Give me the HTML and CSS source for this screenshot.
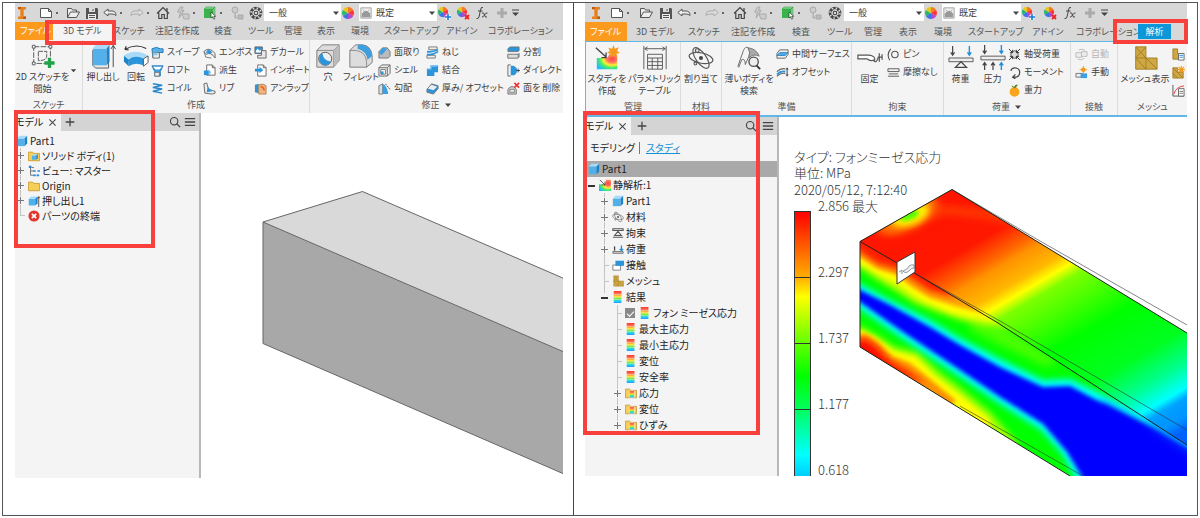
FILE: index.html
```html
<!DOCTYPE html>
<html lang="ja">
<head>
<meta charset="utf-8">
<meta name="viewport" content="width=device-width, initial-scale=1">
<title>3D モデルと解析</title>
<link rel="stylesheet" href="styles.css">
</head>
<body>
<svg class="defs" aria-hidden="true">
  <defs>
    <linearGradient id="rainbow" x1="0" y1="0" x2="0" y2="1"><stop offset="0" stop-color="#f33"/><stop offset=".25" stop-color="#f75"/><stop offset=".45" stop-color="#fd2"/><stop offset=".65" stop-color="#6e5"/><stop offset=".85" stop-color="#2cf"/><stop offset="1" stop-color="#29f"/></linearGradient>
    <radialGradient id="heat" cx=".75" cy=".3" r=".85"><stop offset="0" stop-color="#f44"/><stop offset=".3" stop-color="#f76"/><stop offset=".5" stop-color="#fe3"/><stop offset=".72" stop-color="#4e6"/><stop offset="1" stop-color="#2bf"/></radialGradient>
  </defs>
  <symbol id="logo" viewBox="0 0 14 14"><path d="M3 1h8v2.400H8.700v7.200H11V13H3v-2.400h2.300V3.400H3z" fill="#e8801c"/><path d="M3 1h3v2H3zM8.700 10.600H11V13H8z" fill="#b65b10"/></symbol>
  <symbol id="new" viewBox="0 0 14 14"><path d="M1.500 2.500h8l3 3v6h-11zM9.500 2.500v3h3" fill="#fff" stroke="#555"/></symbol>
  <symbol id="open" viewBox="0 0 14 14"><path d="M1.500 11.500v-9h4l1 1.500h4v2M1.500 11.500l3-5.500h9l-3 5.500z" fill="#eee" stroke="#555"/></symbol>
  <symbol id="save" viewBox="0 0 14 14"><path d="M1 2h11l1 1v10H1z" fill="#555"/><path d="M4 2h6v4H4z" fill="#ddd"/><path d="M3 8h8v5H3z" fill="#eee"/><path d="M4 9.500h6M4 11.500h6M8 3v2" stroke="#555"/></symbol>
  <symbol id="undo" viewBox="0 0 14 14"><path d="M.8 6.500L5 3v2h4q4 0 4 4.500Q11.500 8 9 8H5v2z" fill="#eee" stroke="#555"/></symbol>
  <symbol id="redo" viewBox="0 0 14 14"><path d="M13.200 6.500L9 3v2H5Q1 5 1 9.500 2.500 8 5 8h4v2z" fill="#ddd" stroke="#aaa"/></symbol>
  <symbol id="home" viewBox="0 0 14 14"><path d="M1 7.500L7 1.500l6 6M2.800 6.500v6h3v-4h2.500v4h3v-6M11 2v3" fill="none" stroke="#444" stroke-width="1.200"/></symbol>
  <symbol id="update" viewBox="0 0 14 14"><path d="M4.500 1L1.500 6h3L3 12M4.500 1H7L5.500 4.500H8L3 12M6 8h7v5H8z" fill="#ccc" stroke="#aaa"/></symbol>
  <symbol id="pick" viewBox="0 0 14 14"><path d="M1 3h9v9H1z" fill="#3bb24b"/><path d="M1 3l2-2h9l-2 2zM10 3l2-2v9l-2 2z" fill="#8bd496" stroke="#2a9b3c" stroke-width=".5"/><path d="M8 6v6l1.500-1.300 1.200 2.500 1.200-.7-1.200-2.200h2z" fill="#fff" stroke="#333" stroke-width=".7"/></symbol>
  <symbol id="share" viewBox="0 0 14 14"><circle cx="5" cy="4" r="3" fill="#ccc" stroke="#aaa"/><path d="M5 7v5h2M8 9h5v4H8z" fill="#bbb" stroke="#aaa"/></symbol>
  <symbol id="ring" viewBox="0 0 14 14"><circle cx="7" cy="7" r="5" fill="none" stroke="#444" stroke-width="2.600"/><circle cx="7" cy="7" r="5" fill="none" stroke="#ddd" stroke-width="1.600" stroke-dasharray="1.500 2.430"/><circle cx="7" cy="7" r="1.800" fill="none" stroke="#444"/><path d="M3.500 3.500l2.300 2.300m2.400 2.400l2.300 2.300m0-7L8.200 5.800M5.800 8.200l-2.300 2.300" stroke="#555"/></symbol>
  <symbol id="wheel" viewBox="0 0 14 14"><path d="M7 7V1a6 6 0 0 1 5.200 3z" fill="#f77a20"/><path d="M7 7l5.200-3a6 6 0 0 1 0 6z" fill="#f33"/><path d="M7 7l5.200 3A6 6 0 0 1 7 13z" fill="#b04ad0"/><path d="M7 7v6a6 6 0 0 1-5.200-3z" fill="#3a74e8"/><path d="M7 7l-5.200 3a6 6 0 0 1 0-6z" fill="#28b86a"/><path d="M7 7L1.800 4A6 6 0 0 1 7 1z" fill="#e6c71c"/></symbol>
  <symbol id="wheelplus" viewBox="0 0 14 14"><use href="#wheel" width="12" height="12"/><path d="M11 8v6M8 11h6" stroke="#fff" stroke-width="3"/><path d="M11 8v6M8 11h6" stroke="#1678d2" stroke-width="1.600"/></symbol>
  <symbol id="wheelx" viewBox="0 0 14 14"><use href="#wheel" width="12" height="12"/><path d="M9 9l4 4m0-4l-4 4" stroke="#e22" stroke-width="1.800"/></symbol>
  <symbol id="swatch" viewBox="0 0 14 14"><path d="M1 1h12v12H1z" fill="#eee" stroke="#999"/><path d="M2 12V8q5-7 10 0v4z" fill="#999"/><path d="M3 3l2 2m6-2L9 5" stroke="#aaa"/></symbol>
  <symbol id="fx" viewBox="0 0 14 14"><path d="M8 1.500Q6 .5 5.500 4L4 11q-.5 2-2.500 1.500M3 5h4.500M7 7q2-1 2.500 2t2.500 2M12.500 7Q11 6.500 9.500 9T7 11" fill="none" stroke="#444"/></symbol>
  <symbol id="cross" viewBox="0 0 14 14"><path d="M5.500 2h3v3.500H12v3H8.500V12h-3V8.500H2v-3h3.500z" fill="#aaa"/></symbol>
  <symbol id="more" viewBox="0 0 14 14"><path d="M3 4h7" stroke="#444"/><path d="M3 6.500h7L6.500 10z" fill="#444"/></symbol>
  <symbol id="down" viewBox="0 0 8 8"><path d="M1 2.500h6L4 6z" fill="#444"/></symbol>

  <symbol id="sketch" viewBox="0 0 28 28"><path d="M4 4h18v18H4z" fill="none" stroke="#555" stroke-dasharray="6 1.500"/><path d="M2.500 2.500h3v3h-3zM20.500 2.500h3v3h-3zM2.500 20.500h3v3h-3z" fill="#fff" stroke="#555"/><path d="M9 9h9v5q0 5-9 5z" fill="none" stroke="#555" stroke-dasharray="5 1"/><path d="M21 16v11M15.500 21.500h11" stroke="#1fa347" stroke-width="3.600"/></symbol>
  <symbol id="extrude" viewBox="0 0 28 28"><path d="M3 8v16l3 3h14V10L6 8z" fill="#e8e8e8" stroke="#555"/><path d="M3 6h15v18H3z" fill="#53b0ea"/><path d="M3 6l3-4h15l-3 4z" fill="#a9daf8"/><path d="M18 6l3-4v18l-3 4z" fill="#1e83c8"/><path d="M25 26V3m-2.500 3.500L25 2.500l2.500 4" fill="none" stroke="#444"/></symbol>
  <symbol id="revolve" viewBox="0 0 28 28"><path d="M2 7q12-7 23-1M2 7l1.500-3.500M2 7l4 .5" fill="none" stroke="#333" stroke-width="1.300"/><path d="M1 14q12-8 26 0l-4 7q-8-5-17 0z" fill="#53b0ea"/><path d="M1 14q12-9 26 0l-5 3q-9-5-16 1z" fill="#a9daf8"/><path d="M6 18q7-6 16-1v7q-9-4-16 1z" fill="#2b94da"/><path d="M1 14l5 4v7l-5-5z" fill="#1e83c8"/><path d="M27 14v7l-5 4v-8z" fill="#fff" stroke="#555"/></symbol>
  <symbol id="hole" viewBox="0 0 28 28"><path d="M2 8l6-6h18v17l-6 7H2z" fill="#ddd" stroke="#777"/><path d="M2 8h18v18M20 8l6-6" fill="none" stroke="#888"/><path d="M20 8l6-6v17l-6 7z" fill="#bbb"/><circle cx="11" cy="17" r="7" fill="#eee" stroke="#555"/><path d="M8 11a7 7 0 0 0 3 13 7 7 0 0 0 6-4q-8-1-9-9z" fill="#2b94da"/></symbol>
  <symbol id="fillet" viewBox="0 0 28 28"><path d="M2 8l6-6h8q9 1 10 12v7l-6 5H2z" fill="#ddd" stroke="#777"/><path d="M2 8h6q11 1 12 12v6" fill="none" stroke="#888"/><path d="M11 2h5q9 2 10 12l-5 4Q20 9 10 6z" fill="#3e9fe0"/></symbol>
  <symbol id="study" viewBox="0 0 28 28"><path d="M3 14h9q4 0 4-4h9v16H3z" fill="url(#heat)"/><path d="M2 3l11 10m0-5v5.500H8" fill="none" stroke="#444" stroke-width="1.400"/><path d="M21 0l1.500 4 4-1.500L25 6.500l3 2-4 1 .5 4-3.500-2-3.500 2 .5-4-4-1 3-2L15.500 3l4 1z" fill="#f39a1d"/></symbol>
  <symbol id="table" viewBox="0 0 28 28"><path d="M2 1v25M26 1v25M3 4h22M6 2L3 4l3 2M22 2l3 2-3 2" fill="none" stroke="#555"/><path d="M6 10h16v16H6zM6 14h16M6 18h16M6 22h16M11 14v12M17 14v12" fill="none" stroke="#555"/></symbol>
  <symbol id="atom" viewBox="0 0 28 28"><g fill="none" stroke="#555" stroke-width="1.200"><ellipse cx="14" cy="14" rx="13" ry="5.500" transform="rotate(12 14 14)"/><ellipse cx="14" cy="14" rx="13" ry="5.500" transform="rotate(55 14 14)"/><circle cx="10" cy="6" r="2" fill="#eee"/><circle cx="8" cy="20" r="1.500" fill="#eee"/></g><circle cx="14" cy="14" r="2.200" fill="#444"/></symbol>
  <symbol id="thin" viewBox="0 0 28 28"><path d="M2 23L8 6q2-5 5-3 3 4 1 9l-4 9q0-7-4-5l-3 8z" fill="#f4f4f4" stroke="#666"/><path d="M13 3q9 1 12 9-6-3-11 2 2-6-1-11" fill="#aaa" stroke="#777"/><circle cx="19" cy="18" r="5" fill="#eee" stroke="#555" stroke-width="1.500"/><path d="M22 22l4 4" stroke="#333" stroke-width="2"/></symbol>
  <symbol id="fixed" viewBox="0 0 28 28"><path d="M1 11h12q7 1 6 5-5 2-8-1H1zM18 17q3 3 5-4h4M24 9v9M27 10v6" fill="#fff" stroke="#555" stroke-width="1.300"/></symbol>
  <symbol id="load" viewBox="0 0 28 28"><path d="M1 14h26v4H1z" fill="#eee" stroke="#555"/><path d="M14 18l6 6H8zM5 1v10M3 8l2 3 2-3" fill="none" stroke="#444" stroke-width="1.300"/><path d="M23 1v10M21 8l2 3 2-3" fill="none" stroke="#1b91e0" stroke-width="1.500"/></symbol>
  <symbol id="pressure" viewBox="0 0 28 28"><path d="M1 12h26v4H1z" fill="#eee" stroke="#555"/><path d="M5 0v9M3 6l2 3 2-3M5 27v-8M3 22l2-3 2 3M14 27v-8M12 22l2-3 2 3" fill="none" stroke="#444" stroke-width="1.300"/><path d="M23 0v9M21 6l2 3 2-3M23 27v-8M21 22l2-3 2 3" fill="none" stroke="#1b91e0" stroke-width="1.500"/></symbol>
  <symbol id="mesh" viewBox="0 0 28 28"><path d="M4 2h11v12h12v12H4z" fill="#cfa846" stroke="#a37c22"/><path d="M4 14h11v12M4 2l11 12 12 12M4 14l11 12M15 2L4 14" fill="none" stroke="#a37c22"/></symbol>

  <symbol id="sweep" viewBox="0 0 14 14"><path d="M1 3q5-3 9 0h3v4h-4l-1 5H2z" fill="#58b2ea" stroke="#2378b4"/><path d="M2 7h7v6H2z" fill="#eee" stroke="#666"/><path d="M2 7h5v3H2z" fill="#85c9f2"/></symbol>
  <symbol id="loft" viewBox="0 0 14 14"><path d="M1 2h12l-3 6v5H4V8z" fill="#3c9fe0" stroke="#2378b4"/><path d="M2 3h10L9 6H5z" fill="#fff"/><path d="M4 9h5v4H4z" fill="#eee" stroke="#777"/></symbol>
  <symbol id="coil" viewBox="0 0 14 14"><path d="M2 2l10 1.500L2 6l10 1.500L2 10l10 2" fill="none" stroke="#2789ca" stroke-width="1.600"/></symbol>
  <symbol id="emboss" viewBox="0 0 14 14"><path d="M1 6q5-6 12 2v5Q9 6 3 9z" fill="#eee" stroke="#666"/><path d="M4 5q3-2 6 2L7 9Q6 7 3 7z" fill="#2b94da"/><path d="M1 6l2 6 6 1" fill="none" stroke="#777"/></symbol>
  <symbol id="derive" viewBox="0 0 14 14"><path d="M4 1h6l3 3v8H4zM10 1v3h3" fill="#fff" stroke="#666"/><path d="M1 7h6v5H1z" fill="#2b94da"/><path d="M6 6l3 3-3 3" fill="#85c9f2"/></symbol>
  <symbol id="rib" viewBox="0 0 14 14"><path d="M1 2l3-1 2 7 7 2v2l-3 1-8-1z" fill="#eee" stroke="#666"/><path d="M5 5l5 5-6 1z" fill="#2b94da"/></symbol>
  <symbol id="decal" viewBox="0 0 14 14"><path d="M1 1h8v7H1z" fill="#2b94da" stroke="#666"/><path d="M2 5l2-2 2 2 2-1v3H2z" fill="#fff"/><path d="M8 5h5v8H4v-3h4z" fill="#e7e7e7" stroke="#666"/></symbol>
  <symbol id="import" viewBox="0 0 14 14"><path d="M4 1h6l3 3v9H4zM10 1v3h3" fill="#fff" stroke="#666"/><path d="M1 5h5V3l4 3.500L6 10V8H1z" fill="#2b94da"/></symbol>
  <symbol id="unwrap" viewBox="0 0 14 14"><path d="M1 3l4-1v10l-4-1z" fill="#2b94da"/><path d="M5 3q5-2 8 1v9H5z" fill="#f4b184" stroke="#a85"/><path d="M7 5q3 0 4 4" fill="none" stroke="#e26b2c" stroke-width="2"/></symbol>
  <symbol id="chamfer" viewBox="0 0 14 14"><path d="M1 6l4-4h5l3 4v5l-2 2H1z" fill="#bbb" stroke="#777"/><path d="M1 7l4-5 5 1-6 7z" fill="#3c9fe0"/></symbol>
  <symbol id="shell" viewBox="0 0 14 14"><path d="M1 4l3-3h9v9l-3 3H1zM1 4h9v9M10 4l3-3" fill="#eee" stroke="#666"/><path d="M3 6h5v5H3z" fill="#fff" stroke="#777"/><path d="M3 8h3v3H3z" fill="#2b94da"/></symbol>
  <symbol id="draft" viewBox="0 0 14 14"><path d="M1 4l4-2v11H1z" fill="#ddd" stroke="#777"/><path d="M5 2q5 2 6 11H5z" fill="#3c9fe0"/><path d="M8 2l5 6" stroke="#444" stroke-dasharray="2 1"/></symbol>
  <symbol id="thread" viewBox="0 0 14 14"><path d="M3 1h9v3H3zM1 10h9v3H1z" fill="#eee" stroke="#777"/><path d="M1 6q5 1 12-2M1 9q6 1 12-3" fill="none" stroke="#2b94da" stroke-width="1.800"/></symbol>
  <symbol id="combine" viewBox="0 0 14 14"><path d="M5 1h8v8H9v4H1V5h4z" fill="#2b94da"/><path d="M5 1h8l-1 2H6v3H2L1 5h4z" fill="#7cc3ef"/></symbol>
  <symbol id="thick" viewBox="0 0 14 14"><path d="M1 8l5-6 7 2v3l-5 6-7-2z" fill="#2b94da" stroke="#777"/><path d="M2 7l4-4 6 2-4 4z" fill="#eee"/></symbol>
  <symbol id="split" viewBox="0 0 14 14"><path d="M1 3l2-2h10v4l-1 1H1zM1 9h11l1-1v4l-2 1H1z" fill="#2b94da" stroke="#777"/><path d="M1 9h11v4H1z" fill="#ddd" stroke="#888"/></symbol>
  <symbol id="direct" viewBox="0 0 14 14"><path d="M4 1H1v12h3" fill="none" stroke="#666"/><path d="M4 2h3q4 2 4 5t-3 5H4z" fill="#2b94da"/><path d="M10 7h4M12 5v4" stroke="#444"/></symbol>
  <symbol id="delface" viewBox="0 0 14 14"><path d="M1 8q2-4 6-3l3 3v5H1z" fill="#ccc" stroke="#777"/><path d="M3 8h5v3H3z" fill="#eee" stroke="#888"/><path d="M8 1l5 5m0-5L8 6" stroke="#e33" stroke-width="1.800"/></symbol>
  <symbol id="midsurf" viewBox="0 0 14 14"><path d="M1 6l3-4h9v5l-3 4H1z" fill="#eee" stroke="#666"/><path d="M1 8l3-3h9l-3 3z" fill="#52aee8" stroke="#2b84c4"/></symbol>
  <symbol id="offset" viewBox="0 0 14 14"><path d="M1 6q4-4 9-3M1 11q4-4 9-3M12 3v7" fill="none" stroke="#666" stroke-width="1.300"/><path d="M1 9q4-4 9-3" fill="none" stroke="#2b94da" stroke-width="2"/><path d="M11 4l1-2 1 2m-2 5l1 2 1-2" stroke="#444" fill="none"/></symbol>
  <symbol id="pin" viewBox="0 0 14 14"><circle cx="8.500" cy="7" r="3.500" fill="none" stroke="#555" stroke-width="1.200"/><path d="M4 1Q-1 7 3 13" fill="none" stroke="#555" stroke-width="1.200"/></symbol>
  <symbol id="slide" viewBox="0 0 14 14"><path d="M1 3h12v3H1zM1 11h12M2 8.500h10" fill="none" stroke="#555"/></symbol>
  <symbol id="bearing" viewBox="0 0 14 14"><circle cx="7" cy="7" r="4" fill="#ddd" stroke="#555"/><path d="M1 1l4 4m4 4l4 4m0-12L9 5M5 9l-4 4M5 2v3H2M9 2v3h3M5 12V9H2m7 3V9h3" fill="none" stroke="#333"/></symbol>
  <symbol id="moment" viewBox="0 0 14 14"><path d="M3 5a5 5 0 1 1 5 7H5m3-3l-3 3 3 2" fill="none" stroke="#444" stroke-width="1.300"/></symbol>
  <symbol id="orange" viewBox="0 0 14 14"><circle cx="7" cy="8.500" r="5.300" fill="#f8a41c"/><path d="M7 4q0-3 3-3-1 2-3 3M4 2l3 2" fill="#4b9a36" stroke="#4b7a26"/></symbol>
  <symbol id="auto" viewBox="0 0 14 14"><path d="M1 5h6v5H1zM7 4h6v5H7zM4 2q4-2 7 1M3 12q4 2 7-1" fill="#eee" stroke="#bbb"/></symbol>
  <symbol id="manual" viewBox="0 0 14 14"><path d="M1 8h7v4H1z" fill="#eee" stroke="#777"/><path d="M6 8h7v5H6z" fill="#3c9fe0"/><circle cx="9" cy="4" r="2.500" fill="#f39a1d"/><path d="M9 0v8M5 4h8" stroke="#f39a1d"/></symbol>
  <symbol id="meshset" viewBox="0 0 14 14"><path d="M1 1h5v5h6v6H1z" fill="#cfa846" stroke="#a37c22"/><path d="M7 6h6v7H7z" fill="#fff" stroke="#666"/><path d="M8 8h4M8 10h4" stroke="#2b94da"/></symbol>
  <symbol id="meshloc" viewBox="0 0 14 14"><path d="M1 2h5v5h6v6H1zM1 2l11 11M1 8l5 5" fill="#cfa846" stroke="#a37c22"/><path d="M10 0v8M6 4h8M7 1l6 6m0-6L7 7" stroke="#f39a1d" stroke-width="1.300"/></symbol>
  <symbol id="converge" viewBox="0 0 14 14"><path d="M1 1v12h12" fill="none" stroke="#555"/><path d="M2 11q2-8 11-9" fill="none" stroke="#e33"/><path d="M7 5h6v8H7z" fill="#fff" stroke="#666"/><path d="M8 8h4M8 10h4" stroke="#777"/></symbol>

  <symbol id="cube" viewBox="0 0 14 14"><path d="M1 4h9v9H1z" fill="#4fb0ea"/><path d="M1 4l3-3h9l-3 3z" fill="#a5dbf8"/><path d="M10 4l3-3v9l-3 3z" fill="#1d82c8"/></symbol>
  <symbol id="folder" viewBox="0 0 14 14"><path d="M.5 2.500h5l1 1.500h7v8.500H.5z" fill="#f7ce57" stroke="#c99a2a"/></symbol>
  <symbol id="solids" viewBox="0 0 14 14"><use href="#folder" width="14" height="14"/><use href="#cube" x="4" y="4" width="8" height="8"/></symbol>
  <symbol id="resfolder" viewBox="0 0 14 14"><use href="#folder" width="14" height="14"/><path d="M5 4.500h6v8H5z" fill="url(#rainbow)" stroke="#fff" stroke-width=".5"/></symbol>
  <symbol id="views" viewBox="0 0 14 14"><path d="M3 3v9h3M3 7h4M4 3h3" fill="none" stroke="#666"/><path d="M1 1h3v2.500H1zM6 6h3v2H6zM11 6h3v2h-3zM6 11h3v2H6zM10 11h3v2h-3z" fill="#2b84d8"/></symbol>
  <symbol id="extrudes" viewBox="0 0 14 14"><use href="#cube" y="1" width="12" height="12"/><path d="M12.500 14V2M11 4l1.500-2L14 4" fill="none" stroke="#444"/></symbol>
  <symbol id="end" viewBox="0 0 14 14"><circle cx="7" cy="7" r="6.500" fill="#e3342f"/><path d="M4.500 4.500l5 5m0-5l-5 5" stroke="#fff" stroke-width="2"/></symbol>
  <symbol id="studys" viewBox="0 0 14 14"><path d="M0 6h6q2 0 2-3V1h6v13H0z" fill="url(#heat)"/><path d="M1 1l6 6m0-4v4H3" fill="none" stroke="#444"/></symbol>
  <symbol id="constraint" viewBox="0 0 14 14"><path d="M1 2h12v2H1zM1 12h12M7 5l4 5H3z" fill="#eee" stroke="#555" stroke-width="1.200"/></symbol>
  <symbol id="loads" viewBox="0 0 14 14"><path d="M1 10h12v2H1z" fill="#ddd" stroke="#666"/><path d="M3 4v5" stroke="#444" stroke-width="1.500"/><path d="M11 3v6M9 7l2 2 2-2" fill="none" stroke="#1b91e0" stroke-width="1.500"/></symbol>
  <symbol id="contact" viewBox="0 0 14 14"><path d="M1 7h9v6H1z" fill="#fff" stroke="#777"/><path d="M4 2h10v6H4z" fill="#2b94da"/></symbol>
  <symbol id="result" viewBox="0 0 14 14"><path d="M2 0h9v14H2z" fill="url(#rainbow)"/><path d="M2 4h9M2 7h9M2 10h9" stroke="#fff" stroke-opacity=".4"/></symbol>
  <symbol id="search" viewBox="0 0 14 14"><circle cx="6" cy="6" r="4.300" fill="none" stroke="#444" stroke-width="1.300"/><path d="M9 9l4 4" stroke="#444" stroke-width="1.500"/></symbol>
  <symbol id="menu" viewBox="0 0 14 14"><path d="M1 3h12M1 7h12M1 11h12" stroke="#444" stroke-width="1.500"/></symbol>
  <symbol id="close" viewBox="0 0 14 14"><path d="M3 3l8 8m0-8l-8 8" stroke="#444" stroke-width="1.300"/></symbol>
  <symbol id="add" viewBox="0 0 14 14"><path d="M7 2v10M2 7h10" stroke="#444" stroke-width="1.500"/></symbol>
</svg>

<main class="frame">
  <section class="cell model">
    <div class="screen">
      <div class="qat">
        <button aria-label="Inventor"><svg><use href="#logo"/></svg></button>
        <button class="drop" aria-label="新規"><svg><use href="#new"/></svg></button>
        <button aria-label="開く"><svg><use href="#open"/></svg></button>
        <button aria-label="保存"><svg><use href="#save"/></svg></button>
        <button class="drop" aria-label="元に戻す"><svg><use href="#undo"/></svg></button>
        <button class="drop" aria-label="やり直し"><svg><use href="#redo"/></svg></button>
        <button aria-label="ホーム"><svg><use href="#home"/></svg></button>
        <button class="drop" aria-label="更新"><svg><use href="#update"/></svg></button>
        <button class="drop" aria-label="選択"><svg><use href="#pick"/></svg></button>
        <button aria-label="共有"><svg><use href="#share"/></svg></button>
        <button aria-label="マテリアル"><svg><use href="#ring"/></svg></button>
        <span class="combo"><select aria-label="材料"><option>一般</option></select><svg><use href="#down"/></svg></span>
        <button aria-label="外観"><svg><use href="#wheel"/></svg></button>
        <span class="combo swatched"><svg class="swatch"><use href="#swatch"/></svg><select aria-label="外観の種類"><option>既定</option></select><svg><use href="#down"/></svg></span>
        <button aria-label="外観を調整"><svg><use href="#wheelplus"/></svg></button>
        <button aria-label="外観をクリア"><svg><use href="#wheelx"/></svg></button>
        <button aria-label="パラメータ"><svg><use href="#fx"/></svg></button>
        <button aria-label="追加"><svg><use href="#cross"/></svg></button>
        <button aria-label="カスタマイズ"><svg><use href="#more"/></svg></button>
      </div>
      <nav class="tabs">
        <button class="file">ファイル</button><button class="active">3D モデル</button><button>スケッチ</button><button>注記を作成</button><button>検査</button><button>ツール</button><button>管理</button><button>表示</button><button>環境</button><button>スタートアップ</button><button>アドイン</button><button>コラボレーション</button>
      </nav>
      <div class="ribbon">
        <div class="group">
          <div class="tools">
            <button class="big"><svg><use href="#sketch"/></svg><span>2D スケッチを<br>開始</span></button>
            <svg class="corner"><use href="#down"/></svg>
          </div>
          <div class="caption">スケッチ</div>
        </div>
        <div class="group">
          <div class="tools">
            <button class="big"><svg><use href="#extrude"/></svg><span>押し出し</span></button>
            <button class="big"><svg><use href="#revolve"/></svg><span>回転</span></button>
            <div class="stack">
              <button><svg><use href="#sweep"/></svg>スイープ</button>
              <button><svg><use href="#loft"/></svg>ロフト</button>
              <button><svg><use href="#coil"/></svg>コイル</button>
            </div>
            <div class="stack">
              <button><svg><use href="#emboss"/></svg>エンボス</button>
              <button><svg><use href="#derive"/></svg>派生</button>
              <button><svg><use href="#rib"/></svg>リブ</button>
            </div>
            <div class="stack">
              <button><svg><use href="#decal"/></svg>デカール</button>
              <button><svg><use href="#import"/></svg>インポート</button>
              <button><svg><use href="#unwrap"/></svg>アンラップ</button>
            </div>
          </div>
          <div class="caption">作成</div>
        </div>
        <div class="group">
          <div class="tools">
            <button class="big"><svg><use href="#hole"/></svg><span>穴</span></button>
            <button class="big"><svg><use href="#fillet"/></svg><span>フィレット</span></button>
            <div class="stack">
              <button><svg><use href="#chamfer"/></svg>面取り</button>
              <button><svg><use href="#shell"/></svg>シェル</button>
              <button><svg><use href="#draft"/></svg>勾配</button>
            </div>
            <div class="stack">
              <button><svg><use href="#thread"/></svg>ねじ</button>
              <button><svg><use href="#combine"/></svg>結合</button>
              <button><svg><use href="#thick"/></svg>厚み/ オフセット</button>
            </div>
            <div class="stack">
              <button><svg><use href="#split"/></svg>分割</button>
              <button><svg><use href="#direct"/></svg>ダイレクト</button>
              <button><svg><use href="#delface"/></svg>面を 削除</button>
            </div>
          </div>
          <div class="caption">修正 <svg><use href="#down"/></svg></div>
        </div>
      </div>
      <div class="work">
        <aside class="browser">
          <div class="browser-head">
            <div class="panel-tab">モデル <button aria-label="閉じる"><svg><use href="#close"/></svg></button></div>
            <button aria-label="パネルを追加"><svg><use href="#add"/></svg></button>
            <span class="spacer"></span>
            <button aria-label="検索"><svg><use href="#search"/></svg></button>
            <button aria-label="メニュー"><svg><use href="#menu"/></svg></button>
          </div>
          <div class="tree">
            <div class="row root"><svg><use href="#cube"/></svg>Part1</div>
            <ul>
              <li><div class="row"><i class="plus"></i><svg><use href="#solids"/></svg>ソリッド ボディ(1)</div></li>
              <li><div class="row"><i class="plus"></i><svg><use href="#views"/></svg>ビュー: マスター</div></li>
              <li><div class="row"><i class="plus"></i><svg><use href="#folder"/></svg>Origin</div></li>
              <li><div class="row"><i class="plus"></i><svg><use href="#extrudes"/></svg>押し出し1</div></li>
              <li><div class="row"><i></i><svg><use href="#end"/></svg>パーツの終端</div></li>
            </ul>
          </div>
        </aside>
        <div class="viewport">
          <svg class="scene" viewBox="201 113 362 365" role="img" aria-label="梁の 3D モデル">
            <path d="M263 222L362.500 191.500 564 278.500V352z" fill="#d9d9d9"/>
            <path d="M263 222L564 352V474L263 343.500z" fill="#a8a8a8"/>
            <path d="M564 278.500L362.500 191.500 263 222V343.500L564 474M263 222L564 352" fill="none" stroke="#666"/>
          </svg>
        </div>
      </div>
      <div class="mark mark-tab"></div>
      <div class="mark mark-tree"></div>
    </div>
  </section>

  <section class="cell analysis">
    <div class="screen">
      <div class="qat">
        <button aria-label="Inventor"><svg><use href="#logo"/></svg></button>
        <button class="drop" aria-label="新規"><svg><use href="#new"/></svg></button>
        <button aria-label="開く"><svg><use href="#open"/></svg></button>
        <button aria-label="保存"><svg><use href="#save"/></svg></button>
        <button class="drop" aria-label="元に戻す"><svg><use href="#undo"/></svg></button>
        <button class="drop" aria-label="やり直し"><svg><use href="#redo"/></svg></button>
        <button aria-label="ホーム"><svg><use href="#home"/></svg></button>
        <button class="drop" aria-label="更新"><svg><use href="#update"/></svg></button>
        <button class="drop" aria-label="選択"><svg><use href="#pick"/></svg></button>
        <button aria-label="共有"><svg><use href="#share"/></svg></button>
        <button aria-label="マテリアル"><svg><use href="#ring"/></svg></button>
        <span class="combo"><select aria-label="材料"><option>一般</option></select><svg><use href="#down"/></svg></span>
        <button aria-label="外観"><svg><use href="#wheel"/></svg></button>
        <span class="combo swatched"><svg class="swatch"><use href="#swatch"/></svg><select aria-label="外観の種類"><option>既定</option></select><svg><use href="#down"/></svg></span>
        <button aria-label="外観を調整"><svg><use href="#wheelplus"/></svg></button>
        <button aria-label="外観をクリア"><svg><use href="#wheelx"/></svg></button>
        <button aria-label="パラメータ"><svg><use href="#fx"/></svg></button>
        <button aria-label="追加"><svg><use href="#cross"/></svg></button>
        <button aria-label="カスタマイズ"><svg><use href="#more"/></svg></button>
      </div>
      <nav class="tabs">
        <button class="file">ファイル</button><button>3D モデル</button><button>スケッチ</button><button>注記を作成</button><button>検査</button><button>ツール</button><button>管理</button><button>表示</button><button>環境</button><button>スタートアップ</button><button>アドイン</button><button>コラボレーション</button><button class="current">解析</button>
      </nav>
      <div class="ribbon">
        <div class="group">
          <div class="tools">
            <button class="big"><svg><use href="#study"/></svg><span>スタディを<br>作成</span></button>
            <button class="big"><svg><use href="#table"/></svg><span>パラメトリック<br>テーブル</span></button>
          </div>
          <div class="caption">管理</div>
        </div>
        <div class="group">
          <div class="tools">
            <button class="big"><svg><use href="#atom"/></svg><span>割り当て</span></button>
          </div>
          <div class="caption">材料</div>
        </div>
        <div class="group">
          <div class="tools">
            <button class="big"><svg><use href="#thin"/></svg><span>薄いボディを<br>検索</span></button>
            <div class="stack">
              <button><svg><use href="#midsurf"/></svg>中間サーフェス</button>
              <button><svg><use href="#offset"/></svg>オフセット</button>
            </div>
          </div>
          <div class="caption">準備</div>
        </div>
        <div class="group">
          <div class="tools">
            <button class="big"><svg><use href="#fixed"/></svg><span>固定</span></button>
            <div class="stack">
              <button><svg><use href="#pin"/></svg>ピン</button>
              <button><svg><use href="#slide"/></svg>摩擦なし</button>
            </div>
          </div>
          <div class="caption">拘束</div>
        </div>
        <div class="group">
          <div class="tools">
            <button class="big"><svg><use href="#load"/></svg><span>荷重</span></button>
            <button class="big"><svg><use href="#pressure"/></svg><span>圧力</span></button>
            <div class="stack">
              <button><svg><use href="#bearing"/></svg>軸受荷重</button>
              <button><svg><use href="#moment"/></svg>モーメント</button>
              <button><svg><use href="#orange"/></svg>重力</button>
            </div>
          </div>
          <div class="caption">荷重 <svg><use href="#down"/></svg></div>
        </div>
        <div class="group">
          <div class="tools">
            <div class="stack">
              <button disabled><svg><use href="#auto"/></svg>自動</button>
              <button><svg><use href="#manual"/></svg>手動</button>
            </div>
          </div>
          <div class="caption">接触</div>
        </div>
        <div class="group">
          <div class="tools">
            <button class="big"><svg><use href="#mesh"/></svg><span>メッシュ表示</span></button>
            <div class="stack">
              <button aria-label="メッシュ設定"><svg><use href="#meshset"/></svg></button>
              <button aria-label="ローカル メッシュ"><svg><use href="#meshloc"/></svg></button>
              <button aria-label="収束設定"><svg><use href="#converge"/></svg></button>
            </div>
          </div>
          <div class="caption">メッシュ</div>
        </div>
      </div>
      <div class="work">
        <aside class="browser">
          <div class="browser-head">
            <div class="panel-tab">モデル <button aria-label="閉じる"><svg><use href="#close"/></svg></button></div>
            <button aria-label="パネルを追加"><svg><use href="#add"/></svg></button>
            <span class="spacer"></span>
            <button aria-label="検索"><svg><use href="#search"/></svg></button>
            <button aria-label="メニュー"><svg><use href="#menu"/></svg></button>
          </div>
          <div class="modes"><span>モデリング</span><a href="#study-tree">スタディ</a></div>
          <div class="tree" id="study-tree">
            <div class="row root selected"><svg><use href="#cube"/></svg>Part1</div>
            <div class="row top"><i class="minus"></i><svg><use href="#studys"/></svg>静解析:1</div>
            <ul>
              <li><div class="row"><i class="plus"></i><svg><use href="#cube"/></svg>Part1</div></li>
              <li><div class="row"><i class="plus"></i><svg><use href="#atom"/></svg>材料</div></li>
              <li><div class="row"><i class="plus"></i><svg><use href="#constraint"/></svg>拘束</div></li>
              <li><div class="row"><i class="plus"></i><svg><use href="#loads"/></svg>荷重</div></li>
              <li><div class="row"><i></i><svg><use href="#contact"/></svg>接触</div></li>
              <li><div class="row"><i></i><svg><use href="#mesh"/></svg>メッシュ</div></li>
              <li><div class="row"><i class="minus"></i><svg><use href="#result"/></svg>結果</div>
                <ul>
                  <li><label class="row"><i></i><input type="checkbox" checked><svg><use href="#result"/></svg>フォン ミーゼス応力</label></li>
                  <li><div class="row"><i></i><svg><use href="#result"/></svg>最大主応力</div></li>
                  <li><div class="row"><i></i><svg><use href="#result"/></svg>最小主応力</div></li>
                  <li><div class="row"><i></i><svg><use href="#result"/></svg>変位</div></li>
                  <li><div class="row"><i></i><svg><use href="#result"/></svg>安全率</div></li>
                  <li><div class="row"><i class="plus"></i><svg><use href="#resfolder"/></svg>応力</div></li>
                  <li><div class="row"><i class="plus"></i><svg><use href="#resfolder"/></svg>変位</div></li>
                  <li><div class="row"><i class="plus"></i><svg><use href="#resfolder"/></svg>ひずみ</div></li>
                </ul>
              </li>
            </ul>
          </div>
        </aside>
        <div class="viewport">
          <svg class="scene" viewBox="779 117 408 359" role="img" aria-label="フォンミーゼス応力の分布">
            <defs>
              <linearGradient id="top" gradientUnits="userSpaceOnUse" x1="860" y1="241" x2="1012" y2="500">
                <stop offset="0" stop-color="#ff1400"/><stop offset=".2" stop-color="#ff1800"/><stop offset=".28" stop-color="#ff6a00"/><stop offset=".31" stop-color="#ff9200"/><stop offset=".38" stop-color="#ffb800"/><stop offset=".42" stop-color="#ff0"/><stop offset=".46" stop-color="#7dff00"/><stop offset=".54" stop-color="#48ff00"/><stop offset=".64" stop-color="#0f0"/><stop offset=".8" stop-color="#00ff20"/><stop offset=".9" stop-color="#00ff90"/><stop offset=".97" stop-color="#0ff"/><stop offset="1" stop-color="#0af"/>
              </linearGradient>
              <clipPath id="body"><path d="M860 241.500L952 189.500 1187 333V476H1070L860 347z"/></clipPath>
              <clipPath id="upper"><path d="M860 241.500L952 189.500 1187 333V446L998 323 916 274z"/></clipPath>
              <filter id="b2" x="-20%" y="-20%" width="140%" height="140%"><feGaussianBlur stdDeviation="2"/></filter>
              <filter id="b3" x="-20%" y="-20%" width="140%" height="140%"><feGaussianBlur stdDeviation="3"/></filter>
              <filter id="b4" x="-30%" y="-30%" width="160%" height="160%"><feGaussianBlur stdDeviation="4"/></filter>
              <filter id="b9" x="-40%" y="-40%" width="180%" height="180%"><feGaussianBlur stdDeviation="8"/></filter>
            </defs>
            <g clip-path="url(#body)">
              <path d="M850 180H1200V490H850z" fill="#0f0"/>
              <path d="M970 300L1060 364 1045 366 1000 345 970 330z" fill="#7dff00" fill-opacity=".6" filter="url(#b4)"/>
              <path d="M845 225L960 290 1010 328 985 325 960 320 935 311 915 303 895 290 878 280 860 268 845 260z" fill="#c8ff00" filter="url(#b3)"/>
              <path d="M845 225L960 290 1000 322 975 318 950 312 920 299 900 285 878 274 860 263 845 256z" fill="#ff0" filter="url(#b2)"/>
              <path d="M845 225L960 290 988 314 955 306 930 298 912 287 897 275 878 269 860 257 845 248z" fill="#ffa000" filter="url(#b2)"/>
              <path d="M845 225L940 275 955 297 930 291 915 281 897 269 878 264 860 252 845 240z" fill="#ff1c00" filter="url(#b3)"/>
              <path d="M845 327L862 327 878 336 895 347 918 352 938 371 962 389 990 412 1020 446 990 440 845 360z" fill="#af0" filter="url(#b3)"/>
              <path d="M845 331L862 331 876 338 893 351 915 357 935 376 960 395 990 420 990 440 845 360z" fill="#ff0" filter="url(#b2)"/>
              <path d="M845 335L866 334 878 342 892 356 910 363 930 379 956 401 945 410 845 360z" fill="#ff9000" filter="url(#b2)"/>
              <path d="M845 341L866 339 876 346 890 361 905 370 925 384 845 360z" fill="#ff0a00" filter="url(#b3)"/>
              <path d="M845 279L862 285 890 300 930 320 960 338 1000 359 1043 380 1070 379 1100 393 1145 413 1200 395V490H1082L1062 454 1041 430 1000 404 960 377 900 337 860 309 845 300z" fill="#0ff" filter="url(#b3)"/>
              <path d="M845 283L862 291 890 305 930 327 960 345 1000 367 1043 387 1070 386 1100 402 1145 425 1200 455V490H1090L1067 452 1043 424 1000 397 960 370 900 330 860 302 845 293z" fill="#00f" filter="url(#b2)"/>
              <path d="M1140 432L1200 400V490H1140z" fill="#0050ff" fill-opacity=".5" filter="url(#b9)"/>
              <path d="M1100 402L1150 428 1200 462V490H1095z" fill="#00f" filter="url(#b4)"/>
            </g>
            <g clip-path="url(#upper)">
              <path d="M850 180H1200V480H850z" fill="url(#top)"/>
              <path d="M885 232L945 210 985 214 1015 220" fill="none" stroke="#ff4a00" stroke-width="6" filter="url(#b4)"/>
              <path d="M875 232L890 212 930 194 940 205 918 226 895 234z" fill="#ff7a00" filter="url(#b4)"/>
              <ellipse cx="910" cy="215" rx="20" ry="10" transform="rotate(-20 910 215)" fill="#fff000" filter="url(#b3)"/>
              <ellipse cx="909" cy="215" rx="10" ry="5" transform="rotate(-20 909 215)" fill="#50ff00" filter="url(#b2)"/>
              <path d="M1140 428L1200 390V460z" fill="#0098ff" filter="url(#b4)"/>
              <path d="M1155 440L1200 415V460z" fill="#0060ff" filter="url(#b4)"/>
            </g>
            <path d="M1187 333L952 189.500 860 241.500V347L1070 476M860 241.500L916 274 998 323 1187 445" fill="none" stroke="#222"/>
            <path d="M952 189.500L1040 241 1187 325M916 274L1000 321 1187 430M960 406L1083 476" fill="none" stroke="#333" stroke-width=".6"/>
            <path d="M897 262l18-10v20l-18 12z" fill="#fff" stroke="#333"/>
            <path d="M899 272l3-2v4m1-3q4-1 6-5 3-2 5-1v3q-3 0-5 3-3 3-5 1z" fill="#eee" stroke="#678" stroke-width=".7"/>
          </svg>
          <div class="legend">
            <p>タイプ: フォンミーゼス応力</p>
            <p>単位: MPa</p>
            <p class="date">2020/05/12, 7:12:40</p>
            <div class="scale">
              <div class="ramp"><b></b><b></b><b></b><b></b></div>
              <div class="values"><span>2.856 最大</span><span>2.297</span><span>1.737</span><span>1.177</span><span>0.618</span></div>
            </div>
          </div>
        </div>
      </div>
      <div class="mark mark-tab"></div>
      <div class="mark mark-tree"></div>
    </div>
  </section>
</main>
</body>
</html>
```

FILE: styles.css
```css
* { box-sizing: border-box; }

body {
  margin: 0;
  background: #fff;
  color: #3c3c3c;
  font: 9px/12px "Noto Sans CJK JP", sans-serif;
  font-feature-settings: "palt";
}

svg { width: 14px; height: 14px; flex: none; display: block; }

.defs { position: absolute; width: 0; height: 0; }

button {
  border: 0;
  padding: 0;
  background: none;
  color: inherit;
  font: inherit;
  font-feature-settings: inherit;
  white-space: nowrap;
  text-align: left;
}

.frame {
  display: grid;
  grid-template-columns: 571fr 623fr;
  margin: 2px;
  border: 1px solid #555;
}

.cell { padding: 0 10px 37px 11px; min-width: 0; }
.cell.model { padding-left: 12px; border-right: 1px solid #444; }
.screen { position: relative; }

/* quick access bar */
.qat {
  display: grid;
  align-items: center;
  height: 19px;
  background: #d8d8d8;
}
.model .qat { grid-template-columns: 24px 27px 19px 18px 27px 26px 20px 27px 27px 19px 15px 77px 18px 78px 19px 19px 20px 14px 1fr; }
.analysis .qat { grid-template-columns: 25px 29px 20px 18px 28px 28px 20px 28px 27px 20px 16px 80px 18px 79px 22px 20px 20px 15px 1fr; }
.analysis .qat button:first-child { padding-left: 4px; }
.qat button { display: flex; align-items: center; gap: 3px; }
.drop::after { content: ""; width: 2px; height: 2px; background: #666; }
.combo {
  display: flex;
  align-items: center;
  height: 17px;
  padding-right: 1px;
  background: #fff;
}
.combo select {
  flex: 1;
  min-width: 0;
  height: 17px;
  padding: 0 5px;
  border: 0;
  appearance: none;
  background: #fff;
  color: inherit;
  font: inherit;
}
.swatched select { padding: 0 3px; }
.combo svg { width: 8px; height: 8px; }
.combo .swatch { width: 14px; height: 12px; }

/* ribbon tabs */
.tabs {
  display: grid;
  height: 18px;
  background: #d8d8d8;
  color: #555;
}
.model .tabs { grid-template-columns: 38px 60px 42px 59px 34px 36px 33px 34px 33px 62px 42px 1fr; }
.analysis .tabs { grid-template-columns: 42px 61px 43px 61px 35px 37px 35px 35px 34px 64px 44px 62px 33px; height: 19px; }
.tabs .file { background: #fb9a1c; color: #fff; padding: 0 5px; }
.tabs .active { background: #f4f4f4; padding-left: 10px; }
.analysis .tabs button:nth-child(2) { padding-left: 9px; }
.tabs .current { background: #0d96d8; color: #fff; text-align: center; height: 15px; align-self: center; }

/* ribbon */
.ribbon {
  display: grid;
  background: #f4f4f4;
  height: 73px;
}
.model .ribbon { grid-template-columns: 67px 227px 1fr; }
.analysis .ribbon {
  grid-template-columns: 94px 41px 130px 92px 127px 47px 1fr;
  height: 76px;
  border: solid #62b8e4;
  border-width: 1px 0 2px 1px;
}
.group { display: flex; flex-direction: column; min-width: 0; }
.group + .group { border-left: 1px solid #dcdcdc; }
.tools { display: grid; flex: 1; padding-top: 3px; }
.model .group:nth-child(1) .tools { grid-template-columns: 1fr 12px; }
.model .group:nth-child(2) .tools { grid-template-columns: 36px 30px 52px 51px 1fr; padding-left: 2px; }
.model .group:nth-child(3) .tools { grid-template-columns: 32px 34px 48px 81px 1fr; padding-left: 2px; }
.analysis .group:nth-child(1) .tools { grid-template-columns: 42px 1fr; }
.analysis .group:nth-child(3) .tools { grid-template-columns: 54px 1fr; }
.analysis .group:nth-child(4) .tools { grid-template-columns: 35px 1fr; }
.analysis .group:nth-child(5) .tools { grid-template-columns: 33px 31px 1fr; }
.analysis .group:nth-child(6) .tools { padding-left: 4px; }
.analysis .group:nth-child(7) .tools { grid-template-columns: 54px 1fr; }

.big { display: flex; flex-direction: column; align-items: center; gap: 2px; text-align: center; }
.big svg { width: 26px; height: 26px; }
.big span { display: block; }
.corner { width: 7px; height: 7px; align-self: center; }
.stack { display: flex; flex-direction: column; }
.stack button { display: flex; align-items: center; gap: 3px; height: 18px; }
.stack svg { width: 13px; height: 13px; }
.stack button:disabled { color: #b4b4b4; }
.caption { display: flex; justify-content: center; align-items: center; gap: 4px; height: 16px; color: #555; }
.caption svg { width: 8px; height: 8px; }

/* model browser */
.work { display: grid; font-size: 10px; color: #222; }
.model .work { grid-template-columns: 186px 1fr; }
.analysis .work { grid-template-columns: 194px 1fr; }
.browser { background: #f4f4f4; border-right: 2px solid #b8b8b8; min-width: 0; }
.browser-head { display: flex; align-items: center; gap: 3px; height: 18px; padding-right: 3px; background: #d4d4d4; }
.panel-tab { display: flex; align-items: center; gap: 4px; height: 18px; padding-right: 3px; background: #f4f4f4; }
.browser-head svg { width: 12px; height: 12px; }
.panel-tab svg { width: 11px; height: 11px; }
.spacer { flex: 1; }
.analysis .browser-head { gap: 5px; }
.modes { display: flex; align-items: center; gap: 5px; height: 26px; padding: 0 5px; line-height: 12px; }
.modes a { color: #1592d6; padding-left: 6px; box-shadow: -1px 0 #777; }

.tree ul { list-style: none; margin: 0; padding: 0 0 0 1px; }
.tree li { background: linear-gradient(#c4c4c4, #c4c4c4) 4px 0 / 1px 100% no-repeat; }
.tree li:last-child { background-size: 1px 8px; }
.row { display: flex; align-items: center; gap: 2px; height: 15px; white-space: nowrap; }
.row svg { width: 12px; height: 12px; }
.model .root { padding-left: 1px; }
.model .tree { padding-top: 2px; }
.analysis .row { height: 16px; }
.analysis .root { padding-left: 3px; }
.analysis .top { padding-left: 2px; }
.analysis .tree > ul { padding-left: 15px; }
.analysis .tree ul ul { padding-left: 13px; }
.selected { background: #a9a9a9; }
.row i { width: 9px; height: 9px; margin-right: 1px; flex: none; }
.row i:not([class]) { background: linear-gradient(#c4c4c4, #c4c4c4) 5px 4px / 4px 1px no-repeat; }
.plus {
  background:
    linear-gradient(#777, #777) 4px 1px / 1px 7px no-repeat,
    linear-gradient(#777, #777) 1px 4px / 7px 1px no-repeat,
    #f4f4f4;
}
.minus { background: linear-gradient(#333, #333) 1px 4px / 7px 2px no-repeat, #f4f4f4; }
.row input {
  display: grid;
  place-items: center;
  appearance: none;
  width: 10px;
  height: 10px;
  margin: 0 2px 0 0;
  background: #888;
}
.row input:checked::after {
  content: "";
  width: 6px;
  height: 3px;
  border: solid #fff;
  border-width: 0 0 1px 1px;
  rotate: -45deg;
}

/* 3D view */
.viewport { display: grid; background: #fff; min-width: 0; align-items: start; }
.scene { grid-area: 1 / 1; width: 100%; height: auto; }
.legend {
  grid-area: 1 / 1;
  display: flex;
  flex-direction: column;
  align-self: stretch;
  z-index: 1;
  padding: 32px 0 0 15px;
  color: #333;
  font-size: 13px;
  font-weight: 300;
  line-height: 16px;
}
.legend p { margin: 0; }
.legend .date { line-height: 18px; }
.scale { display: flex; flex: 1; gap: 7px; line-height: 14px; }
.ramp {
  display: flex;
  flex-direction: column;
  width: 17px;
  margin-top: 12px;
  border: solid #333;
  border-width: 1px 1px 0;
  background: linear-gradient(red, #ffb000 25%, #ff0 32%, #60ff00 50%, #0f0 62%, #00ff60 75%, #0ff 92%, #00ccff);
}
.ramp b { height: 66px; border-bottom: 1px solid #333; }
.ramp b:last-child { border: 0; }
.values { display: flex; flex-direction: column; height: 265px; }
.values span { height: 66px; flex: none; }

/* callout frames */
.mark { position: absolute; border: 4px solid #f8403d; z-index: 2; }
.model .mark-tab { left: 30px; top: 17px; width: 71px; height: 25px; }
.model .mark-tree { left: -1px; top: 107px; width: 141px; height: 138px; }
.analysis .mark-tab { right: -1px; top: 16px; width: 75px; height: 25px; }
.analysis .mark-tree { left: -2px; top: 108px; width: 177px; height: 324px; }
```
